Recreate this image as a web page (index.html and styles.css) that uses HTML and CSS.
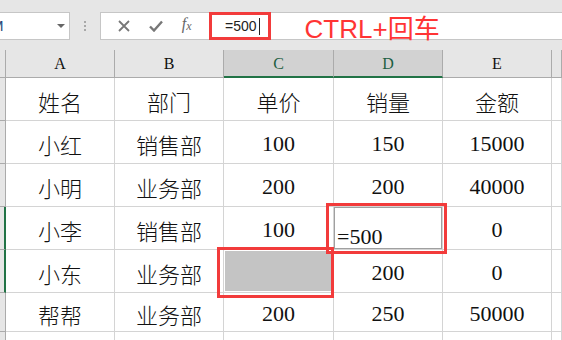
FILE: index.html
```html
<!DOCTYPE html>
<html lang="zh">
<head>
  <meta charset="UTF-8" />
  <title>CTRL+回车</title>
  <link rel="stylesheet" href="styles.css">
</head>
<body>
  <div class="app">
    <div class="toolbar">
      <div class="namebox">
        <span class="name">M</span>
        <span class="caret"></span>
      </div>
      <div class="grip"><i></i><i></i><i></i></div>
      <div class="fx-buttons">
        <svg width="12" height="12" viewBox="0 0 12 12"><path d="M1 1 L11 11 M11 1 L1 11" stroke="#777" stroke-width="1.8" fill="none"/></svg>
        <svg width="14" height="12" viewBox="0 0 14 12"><path d="M1 6.5 L5 10.5 L13 1.5" stroke="#777" stroke-width="2.4" fill="none"/></svg>
        <span class="fx">f<sub>x</sub></span>
      </div>
      <div class="formula">
        <span class="formula-text">=500</span><span class="cursor"></span>
        <span class="hint">CTRL+回车</span>
      </div>
    </div>

    <div class="sheet">
      <div class="hd corner"></div>
      <div class="hd">A</div>
      <div class="hd">B</div>
      <div class="hd on">C</div>
      <div class="hd on">D</div>
      <div class="hd">E</div>
      <div class="hd"></div>

      <div class="rh"></div>
      <div class="c">姓名</div><div class="c">部门</div><div class="c">单价</div><div class="c">销量</div><div class="c">金额</div><div class="c"></div>

      <div class="rh"></div>
      <div class="c">小红</div><div class="c">销售部</div><div class="c">100</div><div class="c">150</div><div class="c">15000</div><div class="c"></div>

      <div class="rh"></div>
      <div class="c">小明</div><div class="c">业务部</div><div class="c">200</div><div class="c">200</div><div class="c">40000</div><div class="c"></div>

      <div class="rh sel"></div>
      <div class="c">小李</div><div class="c">销售部</div><div class="c">100</div><div class="c edit">=500</div><div class="c">0</div><div class="c"></div>

      <div class="rh sel"></div>
      <div class="c">小东</div><div class="c">业务部</div><div class="c fill"></div><div class="c">200</div><div class="c">0</div><div class="c"></div>

      <div class="rh"></div>
      <div class="c">帮帮</div><div class="c">业务部</div><div class="c">200</div><div class="c">250</div><div class="c">50000</div><div class="c"></div>

      <div class="rh"></div>
      <div class="c"></div><div class="c"></div><div class="c"></div><div class="c"></div><div class="c"></div><div class="c"></div>
    </div>

    <div class="mark mark-formula"></div>
    <div class="mark mark-edit"></div>
    <div class="mark mark-fill"></div>
  </div>
</body>
</html>
```

FILE: styles.css
```css
* { margin: 0; padding: 0; box-sizing: border-box; }

body {
  background: #e6e6e6;
  font-family: "Liberation Serif", "Noto Sans CJK SC", serif;
  color: #111;
  overflow: hidden;
}

.app {
  position: relative;
  width: 562px;
  height: 340px;
  overflow: hidden;
}

/* formula bar */
.toolbar {
  display: flex;
  align-items: stretch;
  height: 40px;
  padding-top: 12px;
  margin-bottom: 10px;
}

.namebox {
  position: relative;
  width: 70px;
  background: #fff;
  border: 1px solid #c6c6c6;
  border-left: none;
  overflow: hidden;
}

.name {
  position: absolute;
  left: -9px;
  top: 4px;
  font-family: "Liberation Sans", sans-serif;
  font-size: 15px;
  color: #2b4a7a;
}

.caret {
  position: absolute;
  left: 57px;
  top: 11px;
  border-left: 4px solid transparent;
  border-right: 4px solid transparent;
  border-top: 4px solid #666;
}

.grip {
  width: 30px;
  display: flex;
  flex-direction: column;
  align-items: center;
  justify-content: center;
  gap: 2px;
}

.grip i {
  width: 2px;
  height: 2px;
  background: #a8a8a8;
}

.fx-buttons {
  width: 110px;
  display: flex;
  align-items: center;
  justify-content: space-around;
  padding: 0 8px 0 8px;
  background: #fff;
  border: 1px solid #c6c6c6;
}

.fx {
  font-family: "Liberation Serif", serif;
  font-style: italic;
  font-size: 16px;
  color: #666;
  margin-top: -3px;
}

.fx sub {
  font-size: 12px;
  vertical-align: -1px;
}

.formula {
  flex: 1;
  display: flex;
  align-items: center;
  background: #fff;
  border-top: 1px solid #c6c6c6;
  border-bottom: 1px solid #c6c6c6;
  padding-left: 15px;
}

.formula-text {
  font-family: "Liberation Sans", sans-serif;
  font-size: 14px;
  color: #222;
}

.cursor {
  width: 1px;
  height: 17px;
  background: #222;
  margin-left: 2px;
}

.hint {
  font-family: "Liberation Sans", "Noto Sans CJK SC", sans-serif;
  font-size: 26px;
  color: #ff3434;
  margin-left: 45px;
  margin-top: 1px;
}

/* sheet grid */
.sheet {
  display: grid;
  grid-template-columns: 6px 109px 109px 110px 109px 109px 1fr;
  grid-template-rows: 28px 43px 43px 43px 43px 43px 39px 43px;
  background: #fff;
}

.hd {
  background: #e6e6e6;
  border-right: 1px solid #ababab;
  border-bottom: 1px solid #ababab;
  text-align: center;
  font-size: 16px;
  padding-top: 5px;
  color: #111;
}

.hd.on {
  background: #d2d2d2;
  color: #1d5f42;
  border-bottom: 2px solid #217346;
}

.rh {
  background: #e6e6e6;
  border-right: 1px solid #ababab;
  border-bottom: 1px solid #ababab;
}

.rh.sel {
  border-right: 2px solid #217346;
}

.c {
  display: flex;
  align-items: center;
  justify-content: center;
  padding-top: 4px;
  font-size: 22px;
  font-weight: 300;
  border-right: 1px solid #d4d4d4;
  border-bottom: 1px solid #d4d4d4;
}

.c.edit {
  justify-content: flex-start;
  align-items: flex-end;
  padding: 0 0 0 3px;
  font-family: "Liberation Serif", serif;
  font-size: 22px;
  line-height: 24px;
  box-shadow: inset 0 0 0 1px #a0a0a0;
}

.c.fill {
  background: #c4c4c4;
  box-shadow: inset 0 0 0 1px #fff;
}

/* red annotation boxes */
.mark {
  position: absolute;
  border: 3px solid #f23b3b;
}

.mark-formula { left: 209px; top: 12px; width: 62px; height: 28px; }
.mark-edit { left: 326px; top: 203px; width: 121px; height: 51px; }
.mark-fill { left: 217px; top: 247px; width: 117px; height: 51px; }
```
